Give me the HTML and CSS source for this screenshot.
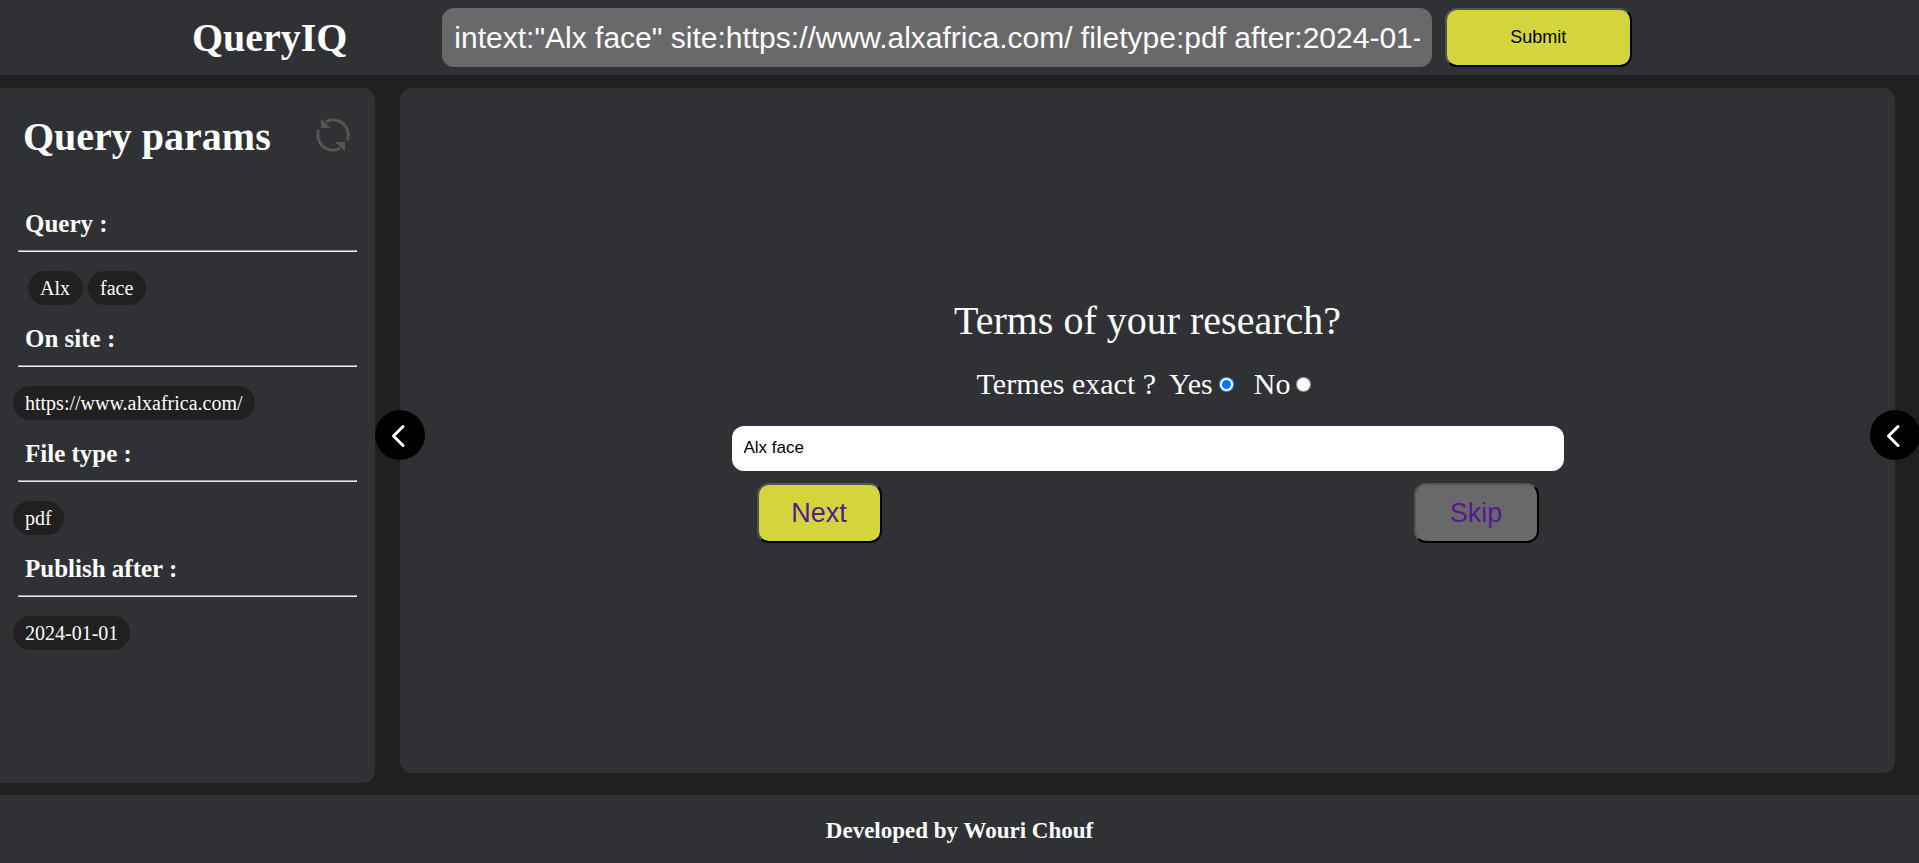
FILE: index.html
```html
<!DOCTYPE html>
<html lang="en">
<head>
<meta charset="utf-8">
<meta name="viewport" content="width=device-width, initial-scale=1">
<title>QueryIQ</title>
<link rel="stylesheet" href="styles.css">
</head>
<body>
<header class="header">
  <h1 class="logo">QueryIQ</h1>
  <form class="search">
    <input class="search-input" type="text" aria-label="Generated query" value='intext:"Alx face" site:https://www.alxafrica.com/ filetype:pdf after:2024-01-01'>
    <button class="btn submit" type="button">Submit</button>
  </form>
</header>

<div class="content">
  <aside class="sidebar">
    <div class="sidebar-head">
      <h2 class="sidebar-title">Query params</h2>
      <button class="reset" type="button" aria-label="Reset">
        <svg width="34" height="34" viewBox="0 0 34 34" fill="none" stroke="#55574f" stroke-width="3">
          <path d="M10 3.700A15 15 0 0 1 31.300 22"/>
          <path d="M24 30.300A15 15 0 0 1 2.700 12"/>
          <path d="M5 1v9h10z M29 33v-9H19z" fill="#55574f" stroke="none"/>
        </svg>
      </button>
    </div>
    <section class="param">
      <h3 class="param-title">Query :</h3>
      <hr class="rule">
      <div class="chips words"><span class="chip">Alx</span><span class="chip">face</span></div>
    </section>
    <section class="param">
      <h3 class="param-title">On site :</h3>
      <hr class="rule">
      <div class="chips"><span class="chip">https://www.alxafrica.com/</span></div>
    </section>
    <section class="param">
      <h3 class="param-title">File type :</h3>
      <hr class="rule">
      <div class="chips"><span class="chip">pdf</span></div>
    </section>
    <section class="param">
      <h3 class="param-title">Publish after :</h3>
      <hr class="rule">
      <div class="chips"><span class="chip">2024-01-01</span></div>
    </section>
  </aside>

  <main class="panel">
    <button class="toggle toggle-left" type="button" aria-label="Collapse parameters">
      <svg width="50" height="50" viewBox="0 0 50 50" fill="none" stroke="#fff" stroke-width="3" stroke-linecap="round" stroke-linejoin="round"><path d="M28 16.500L18.500 26 28 35.500"/></svg>
    </button>
    <form class="question">
      <label class="question-title" for="terms">Terms of your research?</label>
      <div class="exact">
        <span>Termes exact ?</span>
        <label class="choice">Yes<input class="radio" type="radio" name="exact" checked></label>
        <label class="choice">No<input class="radio" type="radio" name="exact"></label>
      </div>
      <input class="terms" id="terms" type="text" value="Alx face">
      <div class="actions">
        <button class="btn step next" type="button">Next</button>
        <button class="btn step skip" type="button">Skip</button>
      </div>
    </form>
    <button class="toggle toggle-right" type="button" aria-label="Open results">
      <svg width="50" height="50" viewBox="0 0 50 50" fill="none" stroke="#fff" stroke-width="3" stroke-linecap="round" stroke-linejoin="round"><path d="M28 16.500L18.500 26 28 35.500"/></svg>
    </button>
  </main>
</div>

<footer class="footer">Developed by Wouri Chouf</footer>
</body>
</html>
```
FILE: styles.css
```css
* {
  box-sizing: border-box;
}

body {
  margin: 0;
  min-height: 100vh;
  display: flex;
  flex-direction: column;
  overflow-x: hidden;
  background: #202020;
  color: #fff;
  font-family: "Liberation Serif", "Times New Roman", serif;
}

h1, h2, h3 {
  margin: 0;
}

input, button {
  font-family: "Liberation Sans", Arial, sans-serif;
}

.header {
  display: flex;
  align-items: center;
  padding: 8px 0;
  background: #303134;
}

.logo {
  width: 23%;
  padding-left: 10%;
  font-size: 40px;
  line-height: 46px;
}

.search {
  flex: 1;
  display: flex;
  gap: 13px;
  padding-left: 1px;
}

.search-input {
  width: 67%;
  padding: 0 12px;
  border: 0;
  border-radius: 12px;
  background: #69696b;
  color: #fff;
  font-size: 30px;
}

.btn {
  border: 2px outset #000;
  border-radius: 12px;
  background: #d4d53c;
  color: #000;
}

.submit {
  width: 187px;
  height: 59px;
  font-size: 18px;
}

.content {
  flex: 1;
  display: flex;
  gap: 25px;
  padding: 13px 24px 12px 0;
}

.sidebar {
  width: 375px;
  flex: none;
  padding: 26px 18px 0;
  border-radius: 0 12px 12px 0;
  background: #303134;
}

.sidebar-head {
  display: flex;
  align-items: flex-start;
  justify-content: space-between;
  margin-bottom: 49px;
  padding: 0 7px 0 5px;
}

.sidebar-title {
  font-size: 40px;
  line-height: 46px;
}

.reset {
  display: flex;
  padding: 4px 0 0;
  border: 0;
  background: none;
}

.param {
  margin-bottom: 19px;
}

.param-title {
  padding-left: 7px;
  font-size: 25px;
  line-height: 30px;
}

.rule {
  margin: 11px 0 19px;
  border: 1px inset #eee;
}

.chips {
  display: flex;
  gap: 5px;
  margin-left: -5px;
}

.words {
  margin-left: 10px;
}

.chip {
  padding: 6px 12px;
  border-radius: 17px;
  background: #202020;
  font-size: 20px;
  line-height: 22px;
}

.words .chip {
  padding-right: 13px;
}

.panel {
  position: relative;
  flex: 1;
  display: flex;
  align-items: center;
  justify-content: center;
  margin-bottom: 10px;
  border-radius: 12px;
  background: #303134;
}

.toggle {
  position: absolute;
  top: 322px;
  width: 50px;
  height: 50px;
  padding: 0;
  border: 0;
  border-radius: 50%;
  background: #000;
}

.toggle svg {
  display: block;
}

.toggle-left {
  left: -25px;
}

.toggle-right {
  right: -25px;
}

.question {
  width: 832px;
  display: flex;
  flex-direction: column;
  align-items: center;
  padding-bottom: 20px;
}

.question-title {
  font-size: 40px;
  line-height: 46px;
}

.exact {
  display: flex;
  gap: 13px;
  margin: 22px 0 24px;
  font-size: 30px;
  line-height: 36px;
}

.choice {
  display: flex;
  align-items: center;
  margin-right: 7px;
}

.radio {
  width: 15px;
  height: 15px;
  margin: 0 0 0 6px;
}

.terms {
  width: 100%;
  height: 45px;
  padding: 0 12px 2px;
  border: 0;
  border-radius: 12px;
  background: #fff;
  color: #000;
  font-size: 17px;
}

.actions {
  align-self: stretch;
  display: flex;
  justify-content: space-between;
  padding: 12px 25px 0;
}

.step {
  width: 125px;
  height: 60px;
  color: #551a8b;
  font-size: 27px;
}

.skip {
  background: #69696b;
}

.footer {
  padding: 24px 0 20px;
  background: #303134;
  font-size: 23px;
  font-weight: bold;
  line-height: 24px;
  text-align: center;
}
```
